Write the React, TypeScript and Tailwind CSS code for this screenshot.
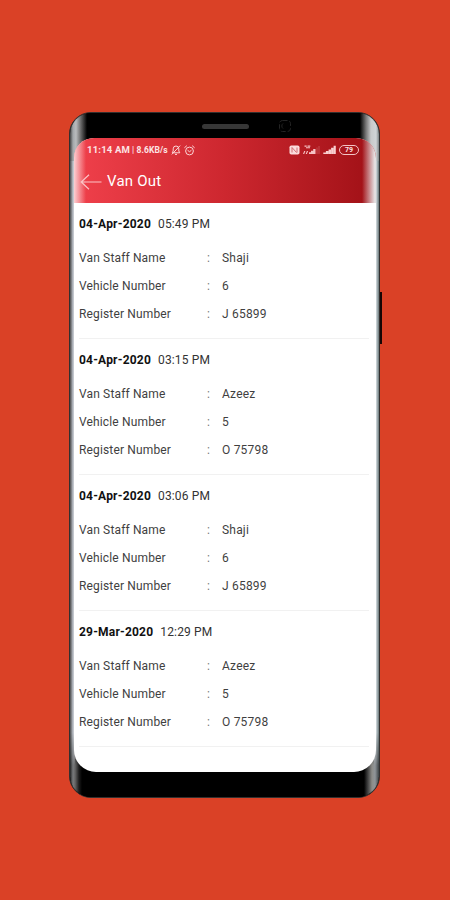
import React from 'react';

interface VanRecord {
  date: string;
  time: string;
  staff: string;
  vehicle: string;
  register: string;
}

const records: VanRecord[] = [
  { date: '04-Apr-2020', time: '05:49 PM', staff: 'Shaji', vehicle: '6', register: 'J 65899' },
  { date: '04-Apr-2020', time: '03:15 PM', staff: 'Azeez', vehicle: '5', register: 'O 75798' },
  { date: '04-Apr-2020', time: '03:06 PM', staff: 'Shaji', vehicle: '6', register: 'J 65899' },
  { date: '29-Mar-2020', time: '12:29 PM', staff: 'Azeez', vehicle: '5', register: 'O 75798' },
];

const MutedBellIcon = () => (
  <svg className="h-2.5 w-2.5" viewBox="0 0 10 10" fill="none" stroke="#fbd5d6" strokeWidth="1">
    <path d="M1.2 7.8h7.6L7.8 6V3.8a2.8 2.8 0 0 0-5.6 0V6l-1 1.8M4 9.4h2M9.2.6.8 9.4" />
  </svg>
);

const AlarmIcon = () => (
  <svg className="ml-[3px] h-[11px] w-[11px]" viewBox="0 0 11 11" fill="none" stroke="#fbd5d6" strokeWidth="1">
    <circle cx="5.5" cy="6" r="3.9" />
    <path d="M.4 2.8 2.8.7M10.6 2.8 8.2.7M3.6 5.3l1.9 1.4 1.9-1.4" />
  </svg>
);

const NfcIcon = () => (
  <svg className="h-[10px] w-[11px]" viewBox="0 0 11 10">
    <rect x="0.5" y="0.5" width="10" height="9" rx="1.8" fill="#fbdcdc" />
    <path d="M3 7.5v-5l4.5 5M8 2.5v5" fill="none" stroke="#c8545a" strokeWidth="0.8" />
  </svg>
);

const DataSignalIcon = () => (
  <svg className="ml-[3px] h-[10px] w-[17px]" viewBox="0 0 17 10" fill="#f6c3c5">
    <path d="M1.5.6h2.2v1.2H1.5zM4.5.6h2.8v1.2H4.5zM3 2.2h4v1H3zM0 9l1.2-3h1.2L1.2 9zM2.7 9l1.2-3h1.2L3.9 9z" />
    <path d="M6 7.2h2V9H6zM8 5.7h2.2V9H8zM10.2 4h2.3v5h-2.3z" />
    <path d="M13.5 2.5h1V9h-1zM15.5 1h1v8h-1z" opacity="0.3" />
  </svg>
);

const SignalIcon = () => (
  <svg className="ml-[3px] h-[10px] w-[13px]" viewBox="0 0 13 10" fill="#f9cfd0">
    <path d="M.3 7.5h2.6V9H.3zM2.9 6.1h2.6V9H2.9zM5.6 4.5h2.4V9H5.6zM8.1 2.7h2.4V9H8.1zM10.6.8h2.2V9h-2.2z" />
  </svg>
);

const StatusBar: React.FC = () => (
  <div className="flex h-6 items-center pl-[13px] pr-[17px] text-[#fde4e5]">
    <span className="w-[45px] whitespace-nowrap text-[9.5px] font-bold leading-none tracking-[0.2px]">11:14 AM</span>
    <span className="w-[39px] whitespace-nowrap text-[8.5px] font-bold leading-none tracking-[0.1px]">| 8.6KB/s</span>
    <MutedBellIcon />
    <AlarmIcon />
    <div className="ml-auto flex items-center">
      <NfcIcon />
      <DataSignalIcon />
      <SignalIcon />
      <span className="ml-[3px] flex h-[10px] w-5 items-center justify-center rounded-full border border-[#f3c3c5] text-[7px] font-bold leading-none">
        79
      </span>
    </div>
  </div>
);

const Header: React.FC = () => (
  <header className="relative h-[65px] bg-linear-to-r from-[#f0404b] via-[#cd272f] to-[#a01016]">
    {/* Light caught by the curved glass on both edges */}
    <div className="absolute inset-y-0 left-0 w-3 bg-linear-to-r from-white/75 to-white/0" />
    <div className="absolute bottom-0 right-0 top-0 w-[14px] bg-linear-to-l from-[#e4dfe0] from-10% to-white/0" />
    <div className="relative">
      <StatusBar />
      <div className="flex h-[39px] items-center pl-[6px] text-white">
        <svg className="h-4 w-[22px]" viewBox="0 0 22 16" fill="none" stroke="#fbc4c6" strokeWidth="1.2">
          <path d="M21.5 8H1.2M9 .8 1.2 8 9 15.2" />
        </svg>
        <h1 className="ml-[5px] text-[15px] tracking-[0.2px]">Van Out</h1>
      </div>
    </div>
  </header>
);

const Row = ({ label, value }: { label: string; value: string }) => (
  <div className="flex h-7 items-center text-xs tracking-[0.15px] text-[#3f3f3f]">
    <span className="w-32">{label}</span>
    <span className="w-[15px] text-[#777]">:</span>
    <span className="tracking-[0.2px]">{value}</span>
  </div>
);

const RecordItem = ({ record }: { record: VanRecord }) => (
  <li className="ml-[5px] mr-[7px] h-[136px] border-b border-[#f1f1f1] pt-[7px]">
    <div className="mb-1.5 flex h-7 items-center gap-[7px] text-xs text-[#333]">
      <span className="font-bold tracking-[0.2px] text-[#111]">{record.date}</span>
      <span className="tracking-[0.15px]">{record.time}</span>
    </div>
    <Row label="Van Staff Name" value={record.staff} />
    <Row label="Vehicle Number" value={record.vehicle} />
    <Row label="Register Number" value={record.register} />
  </li>
);

const Phone: React.FC = () => (
  <div className="relative ml-[69px] h-[686px] w-[311px]">
    <div className="absolute -right-[2px] top-[180px] h-[52px] w-[3px] bg-[#160605]" />
    <div className="relative h-full overflow-hidden rounded-[22px] border border-[#33302f] bg-black">
      {/* Metal frame: wide highlights in the top corners, narrow ones at the bottom */}
      <div className="absolute inset-x-0 top-0 h-16 bg-[linear-gradient(to_right,#444_0px,#a3a7aa_3px,#b9bbbd_6px,#777_10px,#000_17px,#000_290px,#777_296px,#c8cacb_301px,#d0d4d6_306px,#7d8587_309px)]" />
      {/* Side rails next to the display */}
      <div className="absolute bottom-5 left-0 top-12 w-[5px] bg-linear-to-r from-[#4c4c4c] via-[#a9adb4] to-[#eef0f5]" />
      <div className="absolute bottom-5 right-0 top-12 w-[5px] bg-linear-to-l from-[#697779] via-[#c5ced2] to-[#cfd5da]" />
      <div className="absolute inset-x-0 bottom-0 h-16 bg-[linear-gradient(to_right,#222_0px,#77797b_3px,#666_5px,#1c1c1c_9px,#000_12px,#000_294px,#444_298px,#8c8c88_302px,#8f9498_305px,#3c4244_309px)] mask-t-from-50%" />
      <div className="absolute left-[132px] top-[11px] h-[5px] w-[47px] rounded-full bg-[#373737]" />
      <svg className="absolute left-[208px] top-[6px] h-[14px] w-[14px]" viewBox="0 0 14 14" fill="none" stroke="#242424">
        <rect x="1.5" y="1.5" width="11" height="11" rx="3" strokeDasharray="5 2" />
        <path d="M5 9.5a3.2 3.2 0 0 1 0-5" />
      </svg>
      <main className="relative ml-1 mt-[25px] h-[634px] w-[302px] overflow-hidden rounded-b-[22px] rounded-t-[20px] bg-white">
        <Header />
        <ul>
          {records.map((record, index) => (
            <RecordItem key={index} record={record} />
          ))}
        </ul>
      </main>
    </div>
  </div>
);

export default function App() {
  return (
    <div className="h-[900px] w-[450px] overflow-hidden bg-[#da4126] pt-28 font-[Roboto,sans-serif]">
      <Phone />
    </div>
  );
}
